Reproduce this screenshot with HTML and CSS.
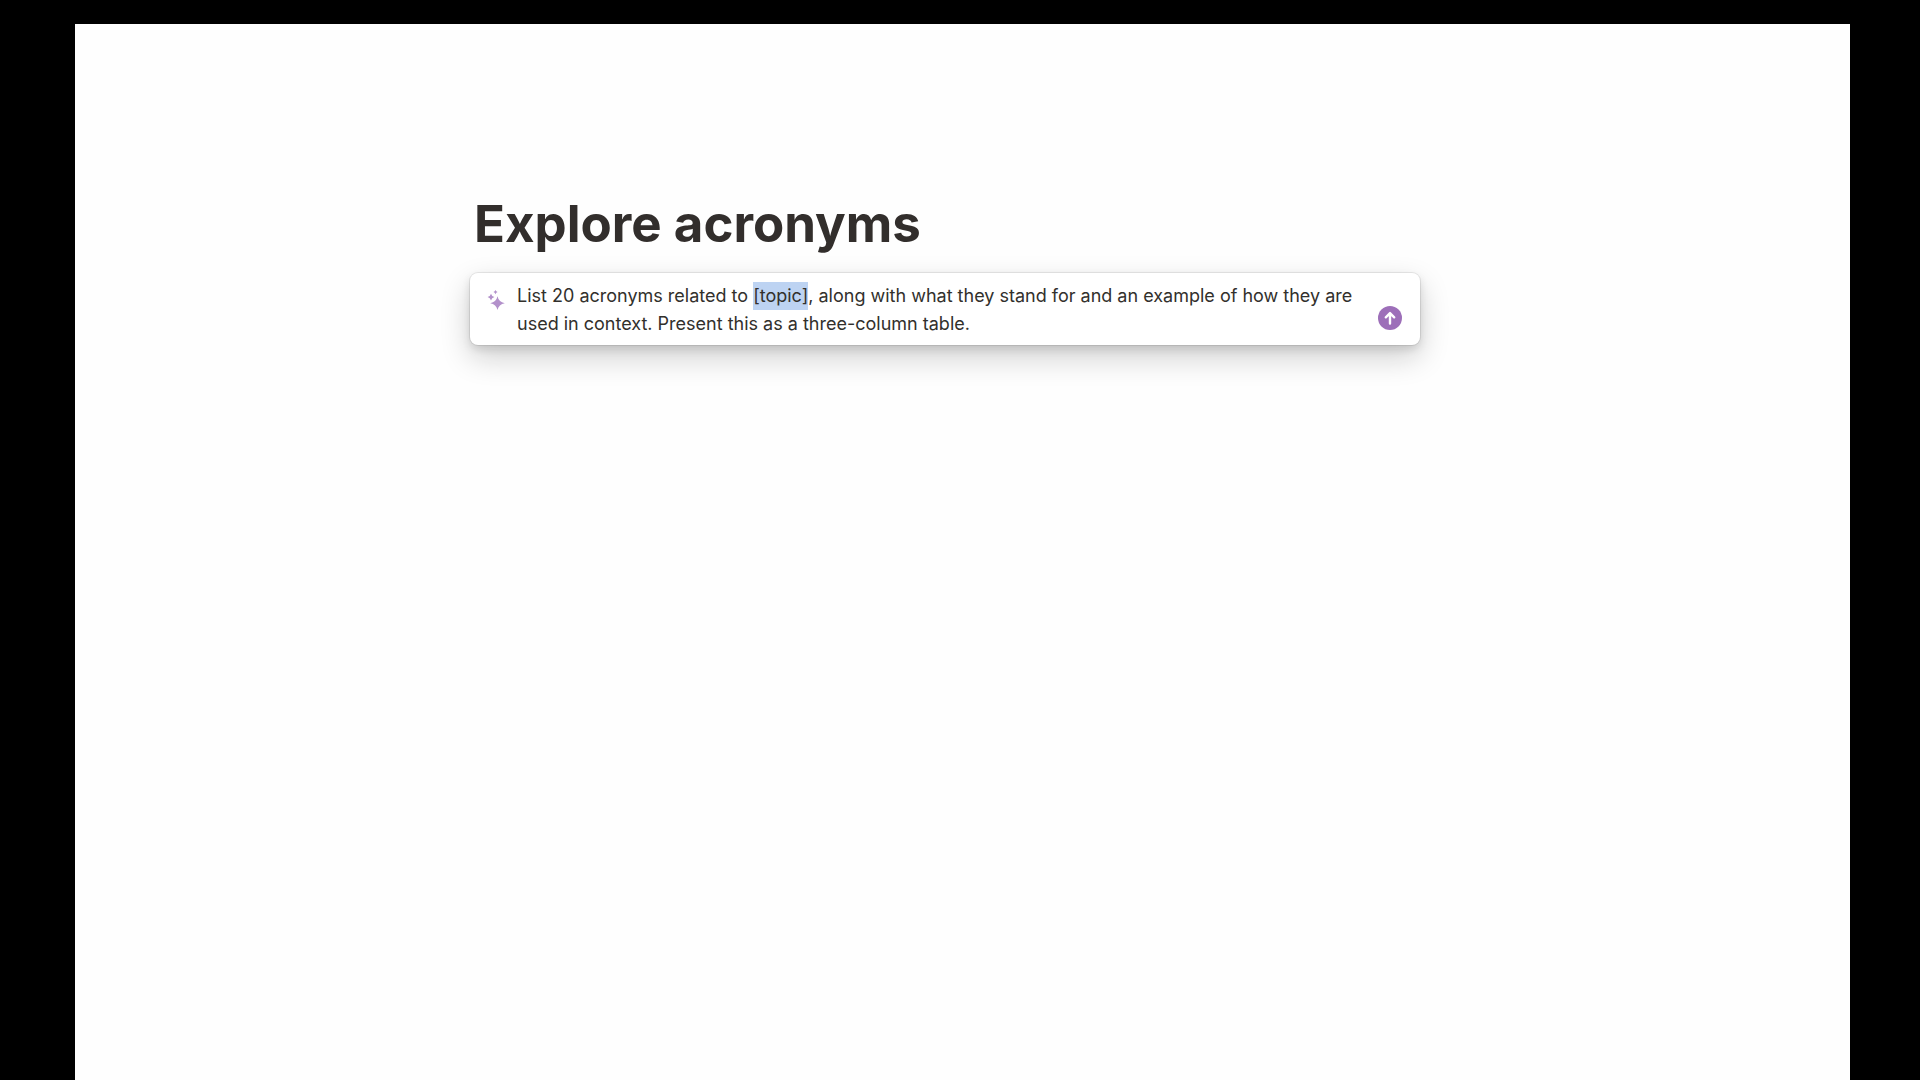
FILE: index.html
```html
<!DOCTYPE html>
<html lang="en">
<head>
<meta charset="UTF-8">
<meta name="viewport" content="width=device-width, initial-scale=1.0">
<title>Explore acronyms</title>
<link rel="stylesheet" href="styles.css">
</head>
<body>
<main class="page">
  <div class="content">
    <h1 class="title">Explore acronyms</h1>
    <form class="prompt" id="promptForm">
      <svg class="sparkles" viewBox="0 0 18 20" aria-hidden="true">
        <path d="M10.500 6.300Q11.700 12.100 17.800 13.300Q11.700 14.500 10.500 20Q9.300 14.500 3.200 13.300Q9.300 12.100 10.500 6.300Z"/>
        <path d="M4 3.700Q4.700 6.400 7.400 7.100Q4.700 7.800 4 10.500Q3.300 7.800 .6 7.100Q3.300 6.400 4 3.700Z"/>
        <path d="M8.500 0Q9 1.600 10.600 2.100Q9 2.600 8.500 4.200Q8 2.600 6.400 2.100Q8 1.600 8.500 0Z"/>
      </svg>
      <textarea class="prompt-text" id="promptText" rows="2" aria-label="Prompt" spellcheck="false" autofocus>List 20 acronyms related to [topic], along with what they stand for and an example of how they are used in context. Present this as a three-column table.</textarea>
      <button class="send" type="submit" aria-label="Send">
        <svg viewBox="0 0 24 24" aria-hidden="true">
          <path d="M12 17.500V7.500M7.800 11.300L12 7.100L16.200 11.300"/>
        </svg>
      </button>
    </form>
  </div>
</main>

<script>
    const promptForm = document.getElementById('promptForm');
    const promptText = document.getElementById('promptText');

    // Select the placeholder so typing replaces it
    const start = promptText.value.indexOf('[topic]');
    promptText.focus();
    promptText.setSelectionRange(start, start + '[topic]'.length);

    promptForm.addEventListener('submit', (event) => {
        event.preventDefault();
    });
</script>
</body>
</html>
```

FILE: styles.css
```css
* {
  box-sizing: border-box;
}
body {
  margin: 0;
  padding: 24px 70px 0 75px;
  min-height: 100vh;
  display: flex;
  background-color: #000000;
  font-family: Inter, "Liberation Sans", sans-serif;
  color: #37352f;
}
.page {
  flex: 1;
  padding: 168px 24px 0;
  background-color: #fefefe;
}
.content {
  max-width: 985px;
  margin: 0 auto;
  padding-right: 35px;
}
.title {
  margin: 0;
  padding-left: 4px;
  font-size: 51px;
  line-height: 64px;
  font-weight: 700;
  color: #322e2c;
}
.prompt {
  display: flex;
  align-items: flex-start;
  margin-top: 17px;
  padding: 9px 18px 7px 17px;
  border-radius: 8px;
  background-color: #ffffff;
  box-shadow: 0 0 0 1px rgba(15, 15, 15, 0.08), 0 4px 8px rgba(15, 15, 15, 0.12), 0 12px 30px rgba(15, 15, 15, 0.2);
}
.sparkles {
  flex: none;
  width: 18px;
  height: 20px;
  margin-top: 8px;
  fill: #b391cb;
}
.prompt-text {
  flex: 1;
  min-width: 0;
  height: 56px;
  margin: 0 8px 0 12px;
  padding: 0;
  border: 0;
  outline: 0;
  resize: none;
  overflow: hidden;
  background: transparent;
  font-family: inherit;
  font-size: 18px;
  line-height: 28px;
  color: #32302c;
}
.prompt-text::selection {
  background-color: #bdd3f2;
  color: #32302c;
}
.send {
  flex: none;
  align-self: flex-end;
  width: 24px;
  height: 24px;
  margin-bottom: 8px;
  padding: 0;
  border: 0;
  border-radius: 50%;
  background-color: #9d6fb9;
  cursor: pointer;
}
.send svg {
  display: block;
  width: 24px;
  height: 24px;
  fill: none;
  stroke: #ffffff;
  stroke-width: 2.4;
  stroke-linecap: round;
  stroke-linejoin: round;
}
```
